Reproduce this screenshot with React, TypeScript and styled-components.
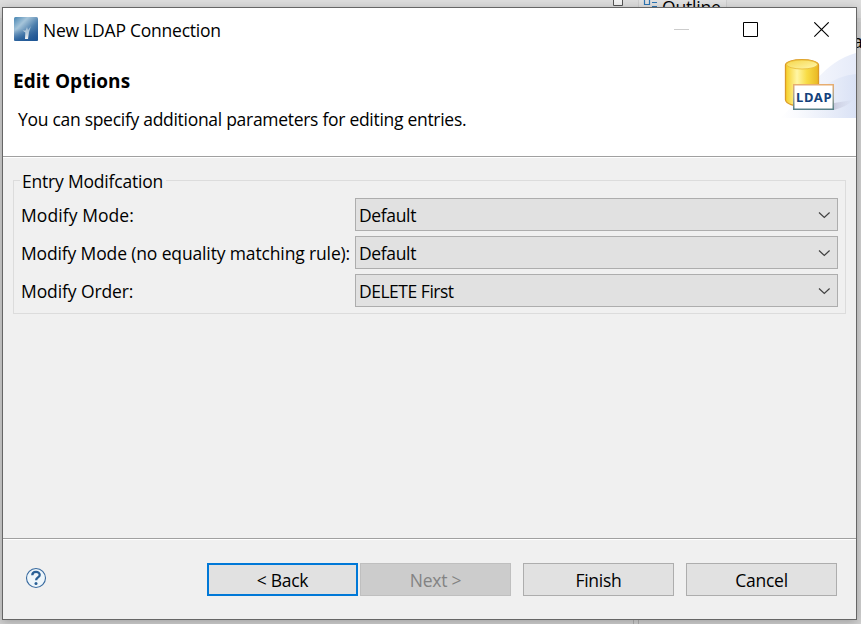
import React from 'react';
import styled, { createGlobalStyle } from 'styled-components';

const Global = createGlobalStyle`
  html, body { margin: 0; overflow: hidden; }
  * { box-sizing: border-box; }
  body { font-family: "Open Sans", "Noto Sans", sans-serif; font-size: 17.5px; color: #000; }
`;

const Desktop = styled.div`
  position: relative;
  width: 861px;
  height: 624px;
  padding: 7px 4px 4px 2px;
  overflow: hidden;
  background: linear-gradient(#dedede 0 18px, #d6d6d6 18px 22px, #d2d2d2 22px);
`;

const BackTab = styled.div`
  position: absolute;
  left: 638px;
  top: 0;
  width: 89px;
  height: 20px;
  background: #e2e2e2;
  border-left: 1px solid #d0d0d0;
  border-right: 1px solid #d0d0d0;
`;

const BackTabText = styled.span`
  position: absolute;
  left: 23px;
  top: -5px;
  line-height: 24px;
  letter-spacing: -0.2px;
`;

const BackGlyph = styled.svg`
  position: absolute;
  left: 612px;
  top: 0;
`;

const BackLetter = styled.span`
  position: absolute;
  left: 853px;
  top: 29px;
  line-height: 24px;
`;

const BackSash = styled.div`
  position: absolute;
  left: 633px;
  bottom: 0;
  width: 6px;
  height: 5px;
  border: solid #b0b0b0;
  border-width: 0 1px;
`;

const Dialog = styled.section`
  position: relative;
  display: flex;
  flex-direction: column;
  width: 855px;
  height: 613px;
  border: 1px solid #666;
  background: #f0f0f0;
  box-shadow: 0 2px 10px rgba(0, 0, 0, 0.25);
`;

const Header = styled.header`
  display: flex;
  flex-direction: column;
  height: 148px;
  background: #fff;
`;

const TitleBar = styled.div`
  display: flex;
  align-items: center;
  height: 44px;
  padding: 0 26px 0 11px;
`;

const TitleIcon = styled.svg`
  display: block;
  margin-bottom: 2px;
`;

const Title = styled.div`
  flex: 1;
  margin-left: 5px;
  line-height: 24px;
`;

const WindowControls = styled.svg`
  display: block;
`;

const Banner = styled.div`
  display: flex;
  flex: 1;
  justify-content: space-between;
`;

const BannerText = styled.div`
  padding: 17px 0 0 10px;
`;

const Heading = styled.h1`
  margin: 0;
  font-size: 19px;
  font-weight: 700;
  line-height: 24px;
`;

const Description = styled.p`
  margin: 14px 0 0 5px;
  line-height: 24px;
`;

const Separator = styled.div`
  height: 2px;
  flex: none;
  background: linear-gradient(#a0a0a0 50%, #fff 50%);
`;

const Content = styled.main`
  flex: 1;
  padding: 22px 10px 0;
`;

const Group = styled.div`
  display: flow-root;
  width: 833px;
  height: 134px;
  padding: 0 7px;
  border: 1px solid #dcdcdc;
`;

const GroupTitle = styled.div`
  display: flow-root;
  width: max-content;
  height: 17px;
  margin-left: -1px;
  padding: 0 2px;
`;

const GroupTitleText = styled.div`
  margin-top: -12px;
  height: 24px;
  line-height: 24px;
  padding: 0 3px 0 2px;
  margin-left: -2px;
  background: #f0f0f0;
`;

const Field = styled.div`
  display: flex;
  height: 33px;
  margin-bottom: 5px;
`;

const FieldLabel = styled.label`
  width: 334px;
  line-height: 35px;
  white-space: nowrap;
`;

const Combo = styled.div`
  display: flex;
  flex: none;
  align-items: center;
  justify-content: space-between;
  width: 483px;
  padding: 0 6px 0 3px;
  background: #e1e1e1;
  border: 1px solid #adadad;
`;

const ComboValue = styled.div`
  padding-top: 2px;
  line-height: 29px;
`;

const Footer = styled.footer`
  display: flex;
  height: 79px;
  padding: 23px 19px 0 22px;
`;

const Help = styled.svg`
  margin: 4px 160px 0 0;
  flex: none;
`;

const Button = styled.button<{ $kind?: 'focus' | 'disabled'; $gap: number }>`
  width: 151px;
  height: 33px;
  padding: 1px 0 0;
  margin: 0 ${p => p.$gap}px 0 0;
  flex: none;
  font: inherit;
  line-height: 28px;
  color: ${p => (p.$kind === 'disabled' ? '#838383' : '#000')};
  background: ${p => (p.$kind === 'disabled' ? '#ccc' : '#e1e1e1')};
  border: ${p => (p.$kind === 'focus' ? '2px solid #0078d7' : p.$kind === 'disabled' ? '1px solid #bfbfbf' : '1px solid #adadad')};
`;

const Fit = styled.span<{ $ls: number }>`
  letter-spacing: ${p => p.$ls}px;
  white-space: nowrap;
`;

const AppIcon = () => (
  <TitleIcon width="24" height="24" viewBox="0 0 24 24">
    <defs>
      <linearGradient id="app" x1="0" y1="0" x2="1" y2="1">
        <stop offset="0" stopColor="#4685b2" />
        <stop offset=".3" stopColor="#a6c5da" />
        <stop offset=".6" stopColor="#4c7eac" />
        <stop offset="1" stopColor="#174a8c" />
      </linearGradient>
      <linearGradient id="shade" x1="0" y1="0" x2="0" y2="1">
        <stop offset=".5" stopColor="#1f5796" stopOpacity="0" />
        <stop offset="1" stopColor="#1f5796" stopOpacity=".8" />
      </linearGradient>
      <linearGradient id="plume" x1="0" y1="0" x2="0" y2="1">
        <stop offset="0" stopColor="#dbe9f0" stopOpacity=".4" />
        <stop offset="1" stopColor="#f4f4f4" />
      </linearGradient>
    </defs>
    <rect width="24" height="24" rx="1.500" fill="url(#app)" />
    <rect width="24" height="24" rx="1.500" fill="url(#shade)" />
    <path d="M11 22L11.300 15.500L8.500 13.500L11.500 13.500L13 10L14 13L17 9L15 15L14 22Z" fill="url(#plume)" />
  </TitleIcon>
);

const BannerArt = () => (
  <svg width="96" height="66" viewBox="0 0 96 66">
    <defs>
      <linearGradient id="swoosh" x1="0" y1="0" x2="1" y2="0">
        <stop offset="0" stopColor="#fff" />
        <stop offset="1" stopColor="#e6ebf9" />
      </linearGradient>
      <linearGradient id="inner" x1="0" y1="0" x2="1" y2="0">
        <stop offset="0" stopColor="#fbfcfe" />
        <stop offset="1" stopColor="#d6dff4" />
      </linearGradient>
      <linearGradient id="gold" x1="0" y1="0" x2="1" y2="0">
        <stop offset="0" stopColor="#f5ce25" />
        <stop offset=".35" stopColor="#fff6a5" />
        <stop offset=".65" stopColor="#f8dc45" />
        <stop offset="1" stopColor="#e9b722" />
      </linearGradient>
      <linearGradient id="lid" x1="0" y1="0" x2="1" y2="1">
        <stop offset="0" stopColor="#f5d648" />
        <stop offset="1" stopColor="#fff7b0" />
      </linearGradient>
      <linearGradient id="frame" x1="0" y1="0" x2="0" y2="1">
        <stop offset="0" stopColor="#e7ad70" />
        <stop offset=".5" stopColor="#a5a698" />
        <stop offset="1" stopColor="#567f87" />
      </linearGradient>
      <linearGradient id="cast" x1="0" y1="0" x2="1" y2="0">
        <stop offset="0" stopColor="#b4b4cc" />
        <stop offset="1" stopColor="#cfd5e8" stopOpacity=".2" />
      </linearGradient>
    </defs>
    <path d="M20 66Q32 56 56 28Q74 7 96 1V66Z" fill="url(#swoosh)" />
    <path d="M34 66Q62 25 96 22V66Z" fill="url(#inner)" opacity=".75" />
    <path d="M74 51L93 48Q88 54 74 58Z" fill="url(#cast)" opacity=".6" />
    <path d="M25.500 13C25.500 6 58.500 6 58.500 13V48C56 57 27 56 25.500 48Z" fill="url(#gold)" stroke="#dc9a28" strokeWidth="1.300" />
    <ellipse cx="42" cy="12.500" rx="15.500" ry="4.500" fill="url(#lid)" stroke="#e7b935" strokeWidth=".8" />
    <rect x="33.750" y="32.750" width="39.500" height="24.500" fill="#fff" stroke="url(#frame)" strokeWidth="1.500" />
    <text x="36" y="50" fontFamily="Noto Sans" fontWeight="700" fontSize="13" fill="#13427c" textLength="35.500" lengthAdjust="spacing">LDAP</text>
  </svg>
);

const Chevron = () => (
  <svg width="14" height="8" viewBox="0 0 14 8">
    <path d="M2 1.500L7.300 6.500L12.600 1.500" fill="none" stroke="#404040" strokeWidth="1.200" />
  </svg>
);

const fields = [
  { label: 'Modify Mode:', ls: 0.08, value: 'Default', vls: -0.35 },
  { label: 'Modify Mode (no equality matching rule):', ls: -0.14, value: 'Default', vls: -0.35 },
  { label: 'Modify Order:', ls: -0.1, value: 'DELETE First', vls: -0.48 },
];

export default function App() {
  return (
    <>
      <Global />
      <Desktop>
        <BackTab><BackTabText>Outline</BackTabText></BackTab>
        <BackGlyph width="50" height="8" viewBox="0 0 50 8">
          <path d="M1.500 0V5.500H10.500V0" fill="#f4f4f4" stroke="#555" />
          <path d="M32.500 0V4.500H37.500V0M40 2.500H45M40 6.500H45" fill="none" stroke="#2d76b5" strokeWidth="1.200" />
        </BackGlyph>
        <BackLetter>a</BackLetter>
        <BackSash />
        <Dialog>
          <Header>
            <TitleBar>
              <AppIcon />
              <Title><Fit $ls={-0.23}>New LDAP Connection</Fit></Title>
              <WindowControls width="156" height="16" viewBox="0 0 156 16" fill="none">
                <path d="M0 7.500H15" stroke="#ccc" />
                <path d="M69.500 .5H83.500V14.500H69.500Z" stroke="#000" />
                <path d="M140.300 .3L154.700 14.700M154.700 .3L140.300 14.700" stroke="#000" strokeWidth="1.100" />
              </WindowControls>
            </TitleBar>
            <Banner>
              <BannerText>
                <Heading><Fit $ls={0.05}>Edit Options</Fit></Heading>
                <Description><Fit $ls={-0.29}>You can specify additional parameters for editing entries.</Fit></Description>
              </BannerText>
              <BannerArt />
            </Banner>
          </Header>
          <Separator />
          <Content>
            <Group>
              <GroupTitle><GroupTitleText><Fit $ls={-0.2}>Entry Modifcation</Fit></GroupTitleText></GroupTitle>
              {fields.map(f => (
                <Field key={f.label}>
                  <FieldLabel><Fit $ls={f.ls}>{f.label}</Fit></FieldLabel>
                  <Combo><ComboValue><Fit $ls={f.vls}>{f.value}</Fit></ComboValue><Chevron /></Combo>
                </Field>
              ))}
            </Group>
          </Content>
          <Separator />
          <Footer>
            <Help width="22" height="22" viewBox="0 0 22 22">
              <circle cx="11" cy="11" r="9.500" fill="#eef6fb" stroke="#386a9f" strokeWidth="1.100" />
              <path d="M7.300 8.300C7.300 3.700 14.700 3.900 14.700 7.900C14.700 10.500 11.100 10.400 11.100 13.300" fill="none" stroke="#2a6096" strokeWidth="2.300" />
              <circle cx="11" cy="16.500" r="1.500" fill="#2a6096" />
            </Help>
            <Button $kind="focus" $gap={2}><Fit $ls={-0.25}>&lt; Back</Fit></Button>
            <Button $kind="disabled" $gap={12}><Fit $ls={-0.25}>Next &gt;</Fit></Button>
            <Button $gap={12}><Fit $ls={-0.25}>Finish</Fit></Button>
            <Button $gap={0}><Fit $ls={-0.25}>Cancel</Fit></Button>
          </Footer>
        </Dialog>
      </Desktop>
    </>
  );
}
